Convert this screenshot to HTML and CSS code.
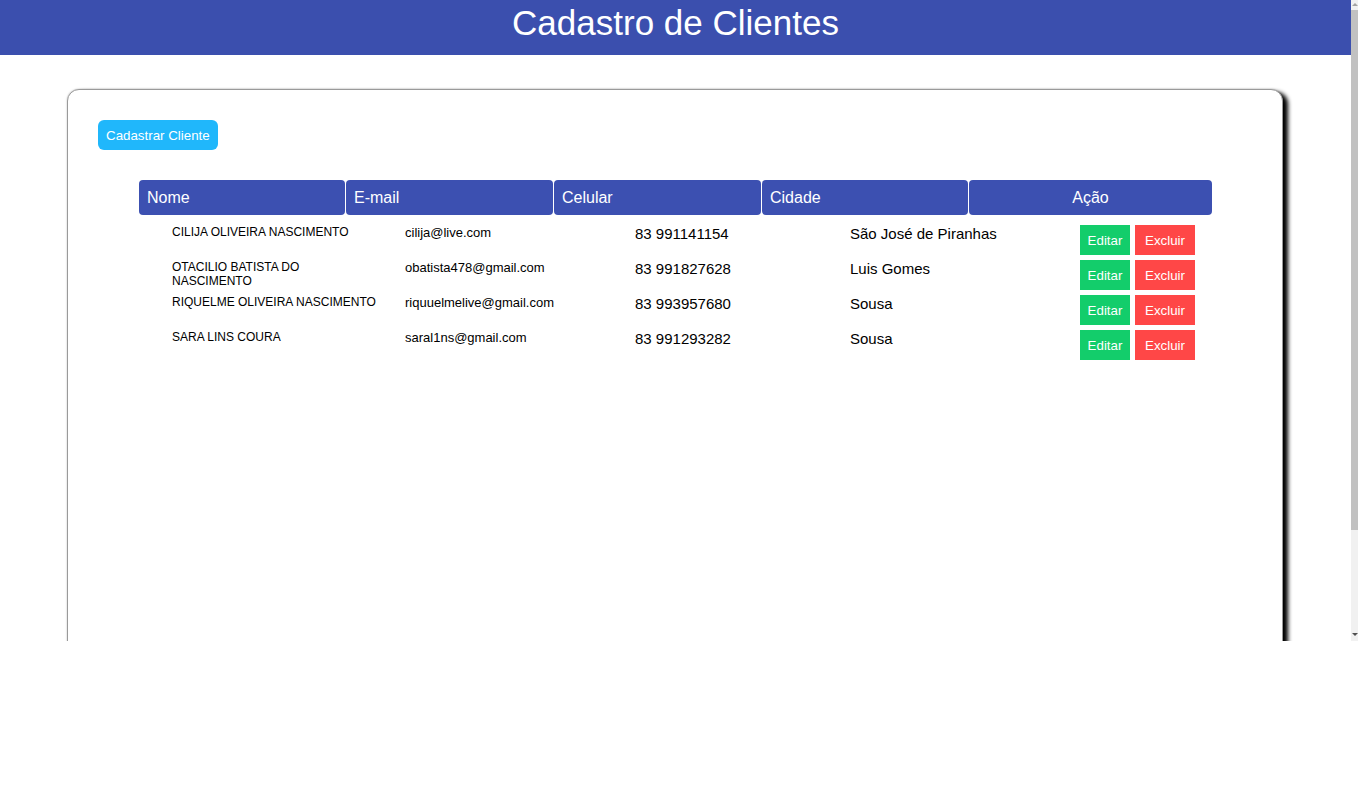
FILE: index.html
```html
<!DOCTYPE html>
<html lang="pt-BR">
<head>
<meta charset="utf-8">
<title>Cadastro de Clientes</title>
<link rel="stylesheet" href="styles.css">
</head>
<body>
<div class="screen">
  <div class="page">
    <header class="topbar">
      <h1 class="title">Cadastro de Clientes</h1>
    </header>
    <main class="card">
      <button class="btn-new">Cadastrar Cliente</button>
      <div class="table">
        <div class="thead">
          <div class="th">Nome</div>
          <div class="th">E-mail</div>
          <div class="th">Celular</div>
          <div class="th">Cidade</div>
          <div class="th th-center">Ação</div>
        </div>
        <div class="tbody">
          <div class="row">
            <div class="c-name"><span class="name-text">CILIJA OLIVEIRA NASCIMENTO</span></div>
            <div class="c-email">cilija@live.com</div>
            <div class="c-phone">83 991141154</div>
            <div class="c-city">São José de Piranhas</div>
            <div class="c-act"><button class="btn-edit">Editar</button><button class="btn-del">Excluir</button></div>
          </div>
          <div class="row">
            <div class="c-name"><span class="name-text">OTACILIO BATISTA DO NASCIMENTO</span></div>
            <div class="c-email">obatista478@gmail.com</div>
            <div class="c-phone">83 991827628</div>
            <div class="c-city">Luis Gomes</div>
            <div class="c-act"><button class="btn-edit">Editar</button><button class="btn-del">Excluir</button></div>
          </div>
          <div class="row">
            <div class="c-name"><span class="name-text">RIQUELME OLIVEIRA NASCIMENTO</span></div>
            <div class="c-email">riquuelmelive@gmail.com</div>
            <div class="c-phone">83 993957680</div>
            <div class="c-city">Sousa</div>
            <div class="c-act"><button class="btn-edit">Editar</button><button class="btn-del">Excluir</button></div>
          </div>
          <div class="row">
            <div class="c-name"><span class="name-text">SARA LINS COURA</span></div>
            <div class="c-email">saral1ns@gmail.com</div>
            <div class="c-phone">83 991293282</div>
            <div class="c-city">Sousa</div>
            <div class="c-act"><button class="btn-edit">Editar</button><button class="btn-del">Excluir</button></div>
          </div>
        </div>
      </div>
    </main>
  </div>
  <div class="scrollbar">
    <div class="arrow-up"></div>
    <div class="thumb"></div>
    <div class="arrow-down"></div>
  </div>
</div>
</body>
</html>
```

FILE: styles.css
```css
html, body {
  margin: 0;
  padding: 0;
  background: #fff;
  font-family: "Liberation Sans", Arial, sans-serif;
}

.screen {
  display: flex;
  height: 641px;
  width: 1358px;
  overflow: hidden;
}

.page {
  flex: 1;
  overflow: hidden;
  display: flex;
  flex-direction: column;
}

.topbar {
  background: #3b4fae;
  height: 55px;
  flex: none;
  box-sizing: border-box;
  padding-top: 3px;
}

.title {
  margin: 0;
  text-align: center;
  color: #fff;
  font-weight: normal;
  font-size: 35px;
  line-height: 40px;
}

.card {
  margin: 34px 68px 0 67px;
  box-sizing: border-box;
  min-height: 700px;
  flex: none;
  border: 1px solid #9a9a9a;
  border-radius: 12px;
  box-shadow: 5px 3px 4px #000, 0 0 2px #bbb;
  padding: 30px;
  background: #fff;
}

.btn-new {
  display: block;
  height: 30px;
  padding: 0 8px;
  border: none;
  border-radius: 6px;
  background: #20b7fb;
  color: #fff;
  font-family: "Liberation Sans", Arial, sans-serif;
  font-size: 13.333px;
}

.table {
  width: 1073px;
  margin: 30px 0 0 41px;
}

.thead {
  display: grid;
  grid-template-columns: 206px 207px 207px 206px 243px;
  column-gap: 1px;
}

.th {
  background: #3c50b1;
  color: #fff;
  height: 35px;
  line-height: 35px;
  font-size: 16px;
  padding-left: 8px;
  border-radius: 4px;
}

.th-center {
  text-align: center;
  padding-left: 0;
}

.tbody {
  margin-top: 5px;
  padding-left: 33px;
}

.row {
  display: grid;
  grid-template-columns: 233px 230px 215px 230px auto;
  height: 35px;
  padding-top: 5px;
  box-sizing: border-box;
  color: #000;
}

.c-name {
  font-size: 12px;
  line-height: 14px;
}

.name-text {
  display: block;
  width: 208px;
}

.c-email {
  font-size: 13px;
}

.c-phone,
.c-city {
  font-size: 15px;
}

.c-act {
  display: flex;
  gap: 5px;
  align-items: flex-start;
}

.btn-edit,
.btn-del {
  height: 30px;
  border: none;
  border-radius: 0;
  color: #fff;
  font-family: "Liberation Sans", Arial, sans-serif;
  font-size: 13.333px;
  padding: 0;
}

.btn-edit {
  width: 50px;
  background: #13cd6b;
}

.btn-del {
  width: 60px;
  background: #ff4747;
}

.scrollbar {
  width: 7px;
  flex: none;
  background: #f1f1f1;
  display: flex;
  flex-direction: column;
  align-items: center;
}

.arrow-up {
  width: 0;
  height: 0;
  margin-top: 3px;
  border-left: 3px solid transparent;
  border-right: 3px solid transparent;
  border-bottom: 3px solid #a3a3a3;
}

.thumb {
  width: 7px;
  height: 520px;
  margin-top: 4px;
  background: #c1c1c1;
}

.arrow-down {
  width: 0;
  height: 0;
  margin-top: auto;
  margin-bottom: 5px;
  border-left: 3px solid transparent;
  border-right: 3px solid transparent;
  border-top: 3px solid #505050;
}
```
